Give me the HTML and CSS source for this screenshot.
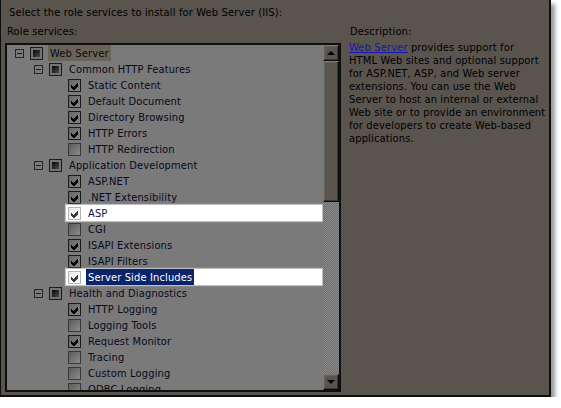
FILE: index.html
```
<!DOCTYPE html>
<html>
<head>
<meta charset="utf-8">
<link rel="stylesheet" href="styles.css">
</head>
<body>
<div class="dialog">
  <div class="title">Select the role services to install for Web Server (IIS):</div>
  <div class="main">
    <div class="left">
      <div class="label">Role services:</div>
      <div class="listbox">
        <div class="rows">
          <div class="row l0"><span class="exp"></span><span class="item"><span class="cb tri"><i></i></span><span class="txt gray">Web Server</span></span></div>
          <div class="row l1"><span class="exp"></span><span class="item"><span class="cb tri"><i></i></span><span class="txt">Common HTTP Features</span></span></div>
          <div class="row l2"><span class="noexp"></span><span class="item"><span class="cb on"><svg viewBox="0 0 11 11"><polygon points="2,5 4,7 8,3 9,3 9,6 5,10 4,10 2,8"/></svg></span><span class="txt">Static Content</span></span></div>
          <div class="row l2"><span class="noexp"></span><span class="item"><span class="cb on"><svg viewBox="0 0 11 11"><polygon points="2,5 4,7 8,3 9,3 9,6 5,10 4,10 2,8"/></svg></span><span class="txt">Default Document</span></span></div>
          <div class="row l2"><span class="noexp"></span><span class="item"><span class="cb on"><svg viewBox="0 0 11 11"><polygon points="2,5 4,7 8,3 9,3 9,6 5,10 4,10 2,8"/></svg></span><span class="txt">Directory Browsing</span></span></div>
          <div class="row l2"><span class="noexp"></span><span class="item"><span class="cb on"><svg viewBox="0 0 11 11"><polygon points="2,5 4,7 8,3 9,3 9,6 5,10 4,10 2,8"/></svg></span><span class="txt">HTTP Errors</span></span></div>
          <div class="row l2"><span class="noexp"></span><span class="item"><span class="cb off"></span><span class="txt">HTTP Redirection</span></span></div>
          <div class="row l1"><span class="exp"></span><span class="item"><span class="cb tri"><i></i></span><span class="txt">Application Development</span></span></div>
          <div class="row l2"><span class="noexp"></span><span class="item"><span class="cb on"><svg viewBox="0 0 11 11"><polygon points="2,5 4,7 8,3 9,3 9,6 5,10 4,10 2,8"/></svg></span><span class="txt">ASP.NET</span></span></div>
          <div class="row l2"><span class="noexp"></span><span class="item"><span class="cb on"><svg viewBox="0 0 11 11"><polygon points="2,5 4,7 8,3 9,3 9,6 5,10 4,10 2,8"/></svg></span><span class="txt">.NET Extensibility</span></span></div>
          <div class="row l2"><span class="noexp"></span><span class="item white"><span class="cb on"><svg viewBox="0 0 11 11"><polygon points="2,5 4,7 8,3 9,3 9,6 5,10 4,10 2,8"/></svg></span><span class="txt">ASP</span></span></div>
          <div class="row l2"><span class="noexp"></span><span class="item"><span class="cb off"></span><span class="txt">CGI</span></span></div>
          <div class="row l2"><span class="noexp"></span><span class="item"><span class="cb on"><svg viewBox="0 0 11 11"><polygon points="2,5 4,7 8,3 9,3 9,6 5,10 4,10 2,8"/></svg></span><span class="txt">ISAPI Extensions</span></span></div>
          <div class="row l2"><span class="noexp"></span><span class="item"><span class="cb on"><svg viewBox="0 0 11 11"><polygon points="2,5 4,7 8,3 9,3 9,6 5,10 4,10 2,8"/></svg></span><span class="txt">ISAPI Filters</span></span></div>
          <div class="row l2"><span class="noexp"></span><span class="item white"><span class="cb on"><svg viewBox="0 0 11 11"><polygon points="2,5 4,7 8,3 9,3 9,6 5,10 4,10 2,8"/></svg></span><span class="txt sel">Server Side Includes</span></span></div>
          <div class="row l1"><span class="exp"></span><span class="item"><span class="cb tri"><i></i></span><span class="txt">Health and Diagnostics</span></span></div>
          <div class="row l2"><span class="noexp"></span><span class="item"><span class="cb on"><svg viewBox="0 0 11 11"><polygon points="2,5 4,7 8,3 9,3 9,6 5,10 4,10 2,8"/></svg></span><span class="txt">HTTP Logging</span></span></div>
          <div class="row l2"><span class="noexp"></span><span class="item"><span class="cb off"></span><span class="txt">Logging Tools</span></span></div>
          <div class="row l2"><span class="noexp"></span><span class="item"><span class="cb on"><svg viewBox="0 0 11 11"><polygon points="2,5 4,7 8,3 9,3 9,6 5,10 4,10 2,8"/></svg></span><span class="txt">Request Monitor</span></span></div>
          <div class="row l2"><span class="noexp"></span><span class="item"><span class="cb off"></span><span class="txt">Tracing</span></span></div>
          <div class="row l2"><span class="noexp"></span><span class="item"><span class="cb off"></span><span class="txt">Custom Logging</span></span></div>
          <div class="row l2"><span class="noexp"></span><span class="item"><span class="cb off"></span><span class="txt">ODBC Logging</span></span></div>
        </div>
        <div class="scrollbar">
          <div class="sb-btn"><span class="arrow up"></span></div>
          <div class="sb-thumb"></div>
          <div class="sb-track"></div>
          <div class="sb-btn"><span class="arrow down"></span></div>
        </div>
      </div>
    </div>
    <div class="right">
      <div class="label">Description:</div>
      <p class="desc"><a class="link">Web Server</a> provides support for<br>HTML Web sites and optional support<br>for ASP.NET, ASP, and Web server<br>extensions. You can use the Web<br>Server to host an internal or external<br>Web site or to provide an environment<br>for developers to create Web-based<br>applications.</p>
    </div>
  </div>
</div>
</body>
</html>
```

FILE: styles.css
```
html, body {
  margin: 0;
  padding: 0;
  background: #ffffff;
}
body {
  font-family: "DejaVu Sans", "Liberation Sans", sans-serif;
  font-stretch: condensed;
  font-size: 11px;
  letter-spacing: 0.15px;
  color: #000000;
}
.dialog {
  box-sizing: border-box;
  width: 551px;
  height: 397px;
  background: #59544e;
  border-left: 1px solid #0e0e0e;
  border-right: 2px solid #0e0e0e;
  border-bottom: 2px solid #0e0e0e;
  box-shadow: 4px 4px 4px rgba(0, 0, 0, 0.4);
  padding: 5px 0 0 4px;
}
.title {
  height: 13px;
  line-height: 15px;
  margin-left: 4px;
  white-space: nowrap;
}
.main {
  display: flex;
  margin-top: 6px;
  gap: 8px;
}
.left {
  width: 336px;
}
.label {
  height: 13px;
  line-height: 15px;
  margin-left: 2px;
  margin-bottom: 6px;
  white-space: nowrap;
}
.right .label {
  margin-left: 1px;
  margin-bottom: 4px;
}
.listbox {
  box-sizing: border-box;
  height: 349px;
  border: 2px solid #0f0f0f;
  background: #7a7a7a;
  display: flex;
}
.rows {
  width: 316px;
  height: 345px;
  overflow: hidden;
  color: #08081a;
}
.row {
  display: flex;
  align-items: center;
  height: 16px;
}
.row.l0 { padding-left: 8px; }
.row.l1 { padding-left: 27px; }
.row.l2 { padding-left: 46px; }
.exp, .noexp {
  box-sizing: border-box;
  width: 9px;
  height: 9px;
  margin-right: 4px;
  flex: none;
  position: relative;
}
.exp {
  border: 1px solid #262626;
}
.exp::after {
  content: "";
  position: absolute;
  left: 1px;
  top: 3px;
  width: 5px;
  height: 1px;
  background: #1a1a1a;
}
.item {
  display: flex;
  align-items: center;
  height: 16px;
  padding-left: 2px;
  flex: 1;
  margin-right: 1px;
}
.item.white {
  background: #ffffff;
  box-shadow: 0 0 1px 1px rgba(220, 220, 220, 0.7);
}
.cb {
  box-sizing: border-box;
  width: 13px;
  height: 13px;
  flex: none;
  margin-right: 5px;
  border: 1px solid #1c1c1c;
  display: flex;
  align-items: center;
  justify-content: center;
}
.cb.on {
  background: linear-gradient(135deg, #666666, #858585);
  color: #050505;
}
.cb.off {
  border-color: #383838;
  background: linear-gradient(135deg, #5c5c5c, #8a8a8a);
}
.cb.tri {
  background: #737373;
}
.cb.tri i {
  display: block;
  width: 7px;
  height: 7px;
  background: linear-gradient(135deg, #080808, #4a4a4a);
}
.cb svg {
  width: 11px;
  height: 11px;
  fill: currentColor;
  shape-rendering: crispEdges;
}
.white .cb {
  border-color: #b4b4b4;
  background: linear-gradient(135deg, #ececec, #ffffff);
  color: #3a3a3a;
}
.txt {
  box-sizing: border-box;
  height: 16px;
  line-height: 16px;
  padding: 1px 2px 0;
  white-space: nowrap;
}
.txt.gray {
  background: #6a6456;
}
.white .txt {
  color: #10103c;
}
.white .txt.sel {
  background: #0a246a;
  color: #ffffff;
}
.scrollbar {
  width: 16px;
  height: 345px;
  display: flex;
  flex-direction: column;
}
.sb-btn, .sb-thumb {
  box-sizing: border-box;
  background: #59544e;
  border: 1px solid;
  border-color: #7d7872 #0d0d0d #0d0d0d #7d7872;
  box-shadow: inset -1px -1px #3a3631, inset 1px 1px #67625c;
}
.sb-btn {
  height: 16px;
  display: flex;
  align-items: center;
  justify-content: center;
  flex: none;
}
.sb-thumb {
  height: 141px;
  flex: none;
}
.sb-track {
  flex: 1;
  background: repeating-conic-gradient(#8c8c8c 0 25%, #6c6c6c 0 50%) 0 0 / 2px 2px;
}
.arrow {
  width: 0;
  height: 0;
  border-left: 4px solid transparent;
  border-right: 4px solid transparent;
}
.arrow.up {
  border-bottom: 4px solid #000000;
}
.arrow.down {
  border-top: 4px solid #000000;
}
.right {
  flex: 1;
}
.desc {
  margin: 0;
  line-height: 13px;
  white-space: nowrap;
  color: #000000;
}
.link {
  color: #1616b0;
  text-decoration: underline;
}
```
